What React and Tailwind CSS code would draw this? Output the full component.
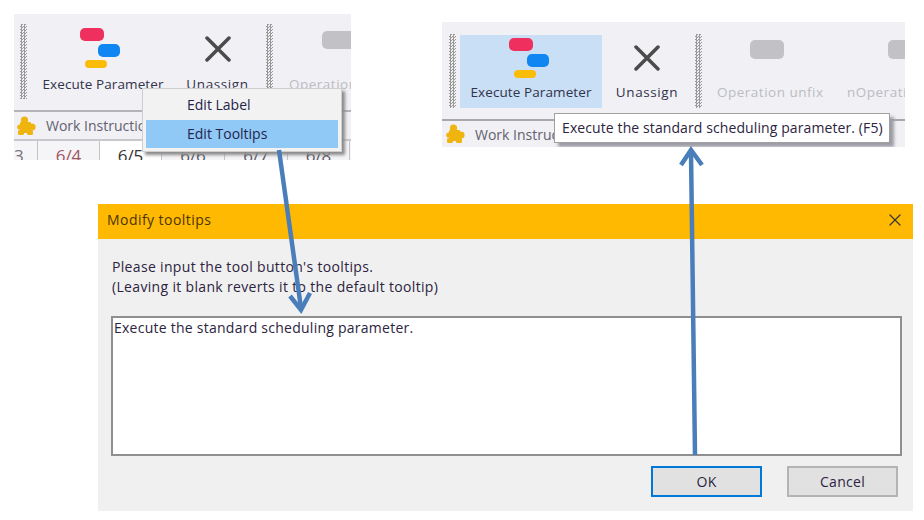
import { X } from 'lucide-react';

const font = { fontFamily: '"Open Sans", "Noto Sans", sans-serif' };

const Grip = ({ className }) => (
    <div className={`w-[7px] shrink-0 bg-[conic-gradient(#999999_25%,#f0f0f5_0_50%,#999999_0_75%,#f0f0f5_0)] bg-[length:3px_3px] ${className}`} />
);

const GanttIcon = () => (
    <svg width="42" height="42" viewBox="0 0 42 42">
        <rect x="0" y="0" width="24" height="13" rx="5" fill="#ef2f5e" />
        <rect x="18" y="16" width="22" height="13" rx="5" fill="#0f86f2" />
        <rect x="5" y="32" width="22" height="8" rx="4" fill="#fbbc05" />
    </svg>
);

const Cross = () => (
    <svg width="26" height="26" viewBox="0 0 26 26">
        <path d="M2 2 L24 24 M24 2 L2 24" stroke="#4b4b4b" strokeWidth="3.5" strokeLinecap="round" />
    </svg>
);

const PuzzleIcon = () => (
    <svg width="19" height="20" viewBox="0 0 19 20" className="shrink-0">
        <g fill="#f0b40f">
            <rect x="3" y="6" width="11" height="11" rx="1" />
            <circle cx="7.5" cy="4" r="3.6" />
            <circle cx="15" cy="11" r="3.6" />
            <circle cx="2.8" cy="11" r="2.6" />
            <rect x="1" y="14" width="6" height="5" rx="1.5" />
            <rect x="10" y="14" width="6" height="5" rx="1.5" />
        </g>
    </svg>
);

const Tab = ({ label }) => (
    <div className="flex items-center h-full">
        <div className="ml-[3px]"><PuzzleIcon /></div>
        <span className="ml-[10px] text-[14px] font-medium text-[#62626e] whitespace-nowrap">{label}</span>
    </div>
);

const LeftCapture = () => (
    <div className="absolute left-[14px] top-[14px] w-[337px] h-[146px] overflow-hidden bg-white">
        <div className="h-[98px] bg-[#f0f0f5] border-b-2 border-[#b4b4b8] flex">
            <Grip className="ml-[6px] mt-[10px] h-[75px]" />
            <div className="w-[132px] shrink-0 ml-[10px] flex flex-col items-center">
                <div className="mt-[14px] ml-[-4px]"><GanttIcon /></div>
                <span className="mt-[4px] text-[13.5px] tracking-[0.1px] text-[#33334a] whitespace-nowrap">Execute Parameter</span>
            </div>
            <div className="w-[97px] shrink-0 flex flex-col items-center">
                <div className="mt-[22px]"><Cross /></div>
                <span className="mt-[12px] text-[13.5px] tracking-[0.6px] text-[#33334a]">Unassign</span>
            </div>
            <Grip className="mt-[10px] h-[75px]" />
            <div className="ml-[16px] shrink-0 flex flex-col">
                <div className="mt-[17px] ml-[33px] w-[40px] h-[18px] rounded-[5px] bg-[#c2c2c6]" />
                <span className="mt-[25px] text-[13.5px] tracking-[0.5px] text-[#bcbcc2] whitespace-nowrap">Operation unfix</span>
            </div>
        </div>
        <div className="h-[29px] bg-[#f0f0f5] border-b-2 border-[#c8c8cc]">
            <Tab label="Work Instructions" />
        </div>
        <div className="h-[19px] flex bg-[#f5f5f8] text-[17px] leading-[30px] text-center text-[#55555f]">
            <div className="w-[24px] shrink-0 text-left border-r border-[#c4c4c8] text-[#77777f]">3</div>
            <div className="w-[62px] shrink-0 border-r border-[#c4c4c8] text-[#a0525f]">6/4</div>
            <div className="w-[62px] shrink-0 bg-white border-r border-[#c4c4c8] text-[#333]">6/5</div>
            <div className="w-[63px] shrink-0 border-r border-[#c4c4c8]">6/6</div>
            <div className="w-[63px] shrink-0 border-r border-[#c4c4c8]">6/7</div>
            <div className="w-[62px] shrink-0 border-r border-[#c4c4c8]">6/8</div>
        </div>
    </div>
);

const ContextMenu = () => (
    <div className="absolute left-[142px] top-[88px] w-[200px] h-[64px] bg-[#f2f2f2] border border-[#cfcfcf] shadow-[3px_3px_3px_#8a8a8a] p-[3px] text-[14px] text-[#24244a]">
        <div className="h-[28px] pl-[41px] leading-[25px]">Edit Label</div>
        <div className="h-[28px] pl-[41px] leading-[27px] bg-[#90c8f6]">Edit Tooltips</div>
    </div>
);

const RightCapture = () => (
    <div className="absolute left-[442px] top-[22px] w-[463px] h-[125px] overflow-hidden bg-[#f0f0f5]">
        <div className="h-[99px] border-b-2 border-[#a8a8ac] flex">
            <Grip className="ml-[7px] mt-[12px] h-[74px]" />
            <div className="ml-[4px] mt-[13px] w-[142px] shrink-0 h-[73px] bg-[#c9dff5] flex flex-col items-center">
                <div className="mt-[3px] ml-[-2px]"><GanttIcon /></div>
                <span className="mt-[2px] text-[13.5px] tracking-[0.1px] text-[#33334a] whitespace-nowrap">Execute Parameter</span>
            </div>
            <div className="w-[90px] shrink-0 flex flex-col items-center">
                <div className="mt-[23px]"><Cross /></div>
                <span className="mt-[11px] text-[13.5px] tracking-[0.6px] text-[#33334a]">Unassign</span>
            </div>
            <Grip className="ml-[3px] mt-[12px] h-[74px]" />
            <div className="ml-[15px] w-[130px] shrink-0 flex flex-col items-start">
                <div className="mt-[18px] ml-[33px] w-[34px] h-[19px] rounded-[5px] bg-[#c2c2c6]" />
                <span className="mt-[23px] text-[13.5px] tracking-[0.5px] text-[#bcbcc2] whitespace-nowrap">Operation unfix</span>
            </div>
            <div className="flex flex-col shrink-0">
                <div className="mt-[18px] ml-[41px] w-[20px] h-[19px] rounded-l-[5px] bg-[#c2c2c6]" />
                <span className="mt-[23px] text-[13.5px] tracking-[0.5px] text-[#bcbcc2] whitespace-nowrap">nOperation</span>
            </div>
        </div>
        <div className="h-[24px] pt-[2px] pl-[1px]">
            <Tab label="Work Instructions" />
        </div>
        <div className="absolute left-[112px] top-[91px] w-[336px] h-[30px] bg-white border border-[#a0a0a0] shadow-[4px_4px_3px_#9c9ca4] px-[7px] text-[14px] tracking-[0.1px] leading-[28px] text-[#2c2440] whitespace-nowrap">
            Execute the standard scheduling parameter. (F5)
        </div>
    </div>
);

const Dialog = () => (
    <div className="absolute left-[98px] top-[204px] w-[815px] h-[307px] bg-[#f0f0f0] flex flex-col text-[#2c2440]">
        <div className="h-[35px] bg-[#ffb900] flex items-center justify-between pl-[9px] pr-[8px] pb-[4px] shrink-0">
            <span className="text-[14px] tracking-[0.45px] text-[#4a3500]">Modify tooltips</span>
            <X size={20} strokeWidth={1.5} className="text-[#3a3a3a]" />
        </div>
        <div className="pl-[14px] pt-[18px] text-[14px] tracking-[0.33px] leading-[20px]">
            <p>Please input the tool button's tooltips.</p>
            <p>(Leaving it blank reverts it to the default tooltip)</p>
        </div>
        <div className="ml-[13px] mt-[19px] w-[791px] h-[140px] bg-white border-2 border-[#8f8f8f] pl-[1px] text-[14px] tracking-[0.25px] leading-[20px]">
            Execute the standard scheduling parameter.
        </div>
        <div className="flex ml-[553px] mt-[10px] gap-[25px] text-[14px] tracking-[0.3px]">
            <button className="w-[111px] h-[31px] bg-[#e1e1e1] border-2 border-[#0078d7]">OK</button>
            <button className="w-[111px] h-[31px] bg-[#e1e1e1] border-2 border-[#b4b4b4]">Cancel</button>
        </div>
    </div>
);

const Arrows = () => (
    <svg className="absolute inset-0 pointer-events-none" width="924" height="520" viewBox="0 0 924 520">
        <g stroke="#4a7ebb" strokeWidth="4.5" fill="none" strokeLinejoin="miter">
            <path d="M279 150 L301 308" />
            <path d="M290 296 L301 310 L310 293" />
            <path d="M695 455 L691 152" />
            <path d="M681 165 L691 150 L702 165" />
        </g>
    </svg>
);

const App = () => {
    return (
        <div className="relative w-[924px] h-[520px] bg-white overflow-hidden" style={font}>
            <LeftCapture />
            <ContextMenu />
            <RightCapture />
            <Dialog />
            <Arrows />
        </div>
    );
};

export default App;
